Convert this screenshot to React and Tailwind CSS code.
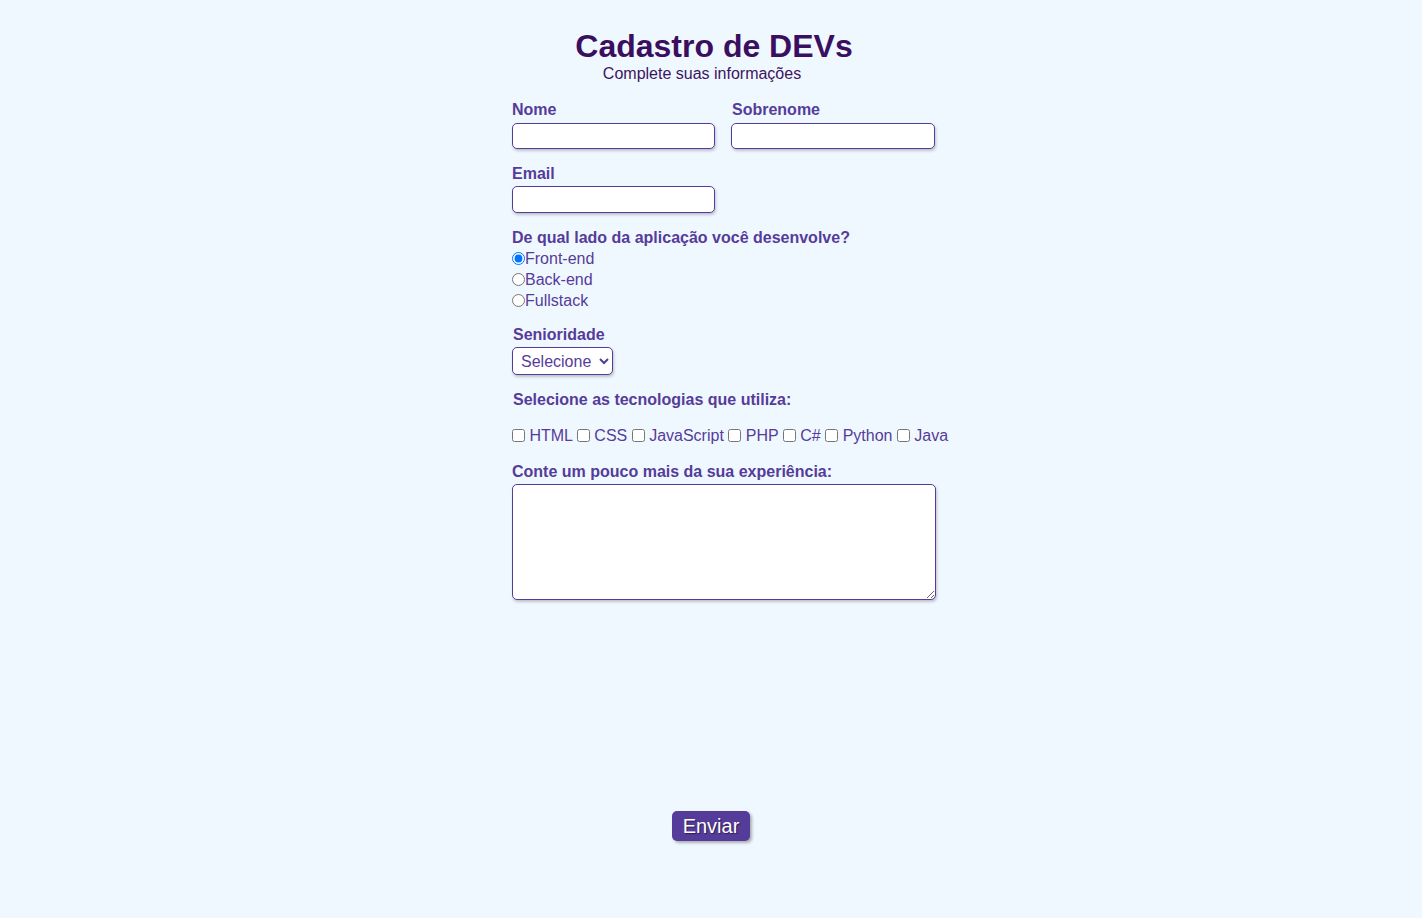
import { useState } from 'react';

const techs = ['HTML', 'CSS', 'JavaScript', 'PHP', 'C#', 'Python', 'Java'];
const sides = ['Front-end', 'Back-end', 'Fullstack'];

const fieldClass =
  'block bg-white border border-[#553c9a] rounded-[5px] shadow-[1px_2px_3px_rgba(0,0,0,0.22)] outline-none';

const App = () => {
  const [side, setSide] = useState('Front-end');

  return (
    <div className="min-h-[918px] bg-[#f0f8ff] font-['Liberation_Sans',Arial,sans-serif] text-[16px] pt-[28px]">
      <header className="flex flex-col items-center">
        <h1 className="text-[32px] leading-[37px] font-bold text-[#3a0f5f] pl-[6px]">
          Cadastro de DEVs
        </h1>
        <p className="leading-[18px] text-[#3b1560] pr-[18px]">Complete suas informações</p>
      </header>

      <div className="flex justify-center">
        <form className="w-[450px] pl-[26px] text-[#553c9a]" onSubmit={(e) => e.preventDefault()}>
          {/* nome / sobrenome */}
          <div className="flex gap-[16px] mt-[18px]">
            <div>
              <label className="block font-bold leading-[18px] mb-[4px]">Nome</label>
              <input type="text" className={`${fieldClass} w-[203px] h-[26px]`} />
            </div>
            <div>
              <label className="block font-bold leading-[18px] mb-[4px] pl-[1px]">Sobrenome</label>
              <input type="text" className={`${fieldClass} w-[204px] h-[26px]`} />
            </div>
          </div>

          <div className="mt-[16px]">
            <label className="block font-bold leading-[18px] mb-[3px]">Email</label>
            <input type="email" className={`${fieldClass} w-[203px] h-[27px]`} />
          </div>

          <div className="mt-[16px]">
            <p className="font-bold leading-[18px] mb-[1px]">De qual lado da aplicação você desenvolve?</p>
            {sides.map((s) => (
              <label key={s} className="flex items-center h-[21px] leading-[21px]">
                <input
                  type="radio"
                  name="lado"
                  checked={side === s}
                  onChange={() => setSide(s)}
                  className="w-[13px] h-[13px]"
                />
                {s}
              </label>
            ))}
          </div>

          <div className="mt-[15px]">
            <label className="block font-bold leading-[18px] mb-[3px] pl-[1px]">Senioridade</label>
            <select className={`${fieldClass} w-[101px] h-[28px] pl-[4px]`} defaultValue="">
              <option value="">Selecione</option>
              <option>Júnior</option>
              <option>Pleno</option>
              <option>Sênior</option>
            </select>
          </div>

          <p className="mt-[16px] font-bold leading-[18px] pl-[1px]">
            Selecione as tecnologias que utiliza:
          </p>

          <div className="mt-[18px] leading-[18px] whitespace-nowrap">
            {techs.map((t, i) => (
              <span key={t}>
                <input type="checkbox" className="w-[13px] h-[13px] align-[-1px]" />
                {' '}{t}{i < techs.length - 1 ? ' ' : ''}
              </span>
            ))}
          </div>

          <div className="mt-[18px]">
            <label className="block font-bold leading-[18px] mb-[3px]">
              Conte um pouco mais da sua experiência:
            </label>
            <textarea className={`${fieldClass} w-[424px] h-[116px]`} />
          </div>
        </form>
      </div>

      <div className="flex justify-center mt-[211px]">
        <button
          type="submit"
          className="w-[78px] h-[30px] bg-[#553c9a] text-white text-[20px] leading-[30px] rounded-[5px] shadow-[2px_2px_3px_rgba(0,0,0,0.3)] [text-shadow:1px_1px_1px_rgba(0,0,0,0.5)]"
        >
          Enviar
        </button>
      </div>
    </div>
  );
};

export default App;
